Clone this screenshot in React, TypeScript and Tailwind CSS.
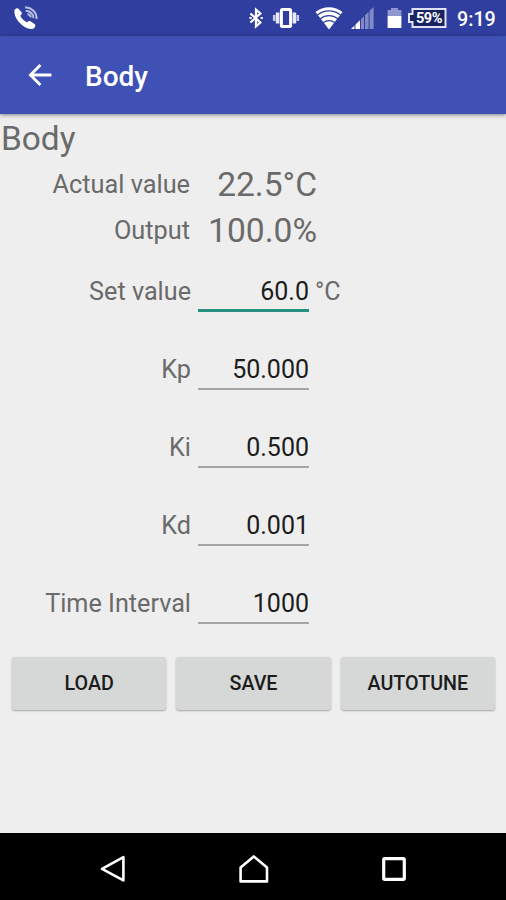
import { useState } from "react";

type Reading = {
  label: string;
  value: string;
};

type Field = {
  id: string;
  label: string;
  value: string;
  unit?: string;
};

const readings: Reading[] = [
  { label: "Actual value", value: "22.5°C" },
  { label: "Output", value: "100.0%" },
];

const fields: Field[] = [
  { id: "set", label: "Set value", value: "60.0", unit: "°C" },
  { id: "kp", label: "Kp", value: "50.000" },
  { id: "ki", label: "Ki", value: "0.500" },
  { id: "kd", label: "Kd", value: "0.001" },
  { id: "interval", label: "Time Interval", value: "1000" },
];

const actions = ["LOAD", "SAVE", "AUTOTUNE"];

const StatusBar = () => (
  <div className="flex h-9 shrink-0 items-center bg-[#303f9f] text-white">
    {/* Wi-Fi calling */}
    <svg width="26" height="26" viewBox="0 0 26 26" className="ml-[13px]">
      <path
        d="M1.4 5.8C1.4 4 4 2.6 5.2 3.6L8.6 7.2C9.3 8.6 8.4 9.8 7.2 10.6C8.4 13.6 11 16 14 17.4C15 16.2 16.2 15.6 17.4 16.2L21.8 19.2C23.2 20.4 21.8 23 20 23.8C12 25.6 0.8 14.4 1.4 5.8Z"
        fill="#fff"
      />
      <g fill="none" stroke="#b9bfe4" strokeWidth="2">
        <path d="M12 2.6C17.5 1.6 24.4 7.4 23.4 14" />
        <path d="M12.8 6C16.6 5.4 21 9.6 20.4 13.2" />
        <path d="M14.4 9.2C16 9 18 11 17.7 12.4" />
      </g>
    </svg>

    <div className="ml-auto flex h-9 items-center">
      <svg width="16" height="22" viewBox="0 0 16 22">
        <path
          d="M2.4 6.5L12.4 15.5L8 19.4V2.6L12.4 6.5L2.4 15.5"
          fill="none"
          stroke="#fff"
          strokeWidth="2.2"
        />
        <path d="M1.4 11H3.6M12.6 11H14.8" stroke="#fff" strokeWidth="2.2" />
      </svg>
      <svg width="28" height="22" viewBox="0 0 28 22" className="ml-[8px]">
        <rect
          x="9.4"
          y="2.4"
          width="9.2"
          height="17.2"
          rx="1"
          fill="none"
          stroke="#fff"
          strokeWidth="3"
        />
        <path d="M5.6 5.5V16.5M22.4 5.5V16.5" stroke="#e8eaf6" strokeWidth="3.6" />
        <path d="M2.2 8V14M25.8 8V14" stroke="#c5cae9" strokeWidth="2.6" />
      </svg>
      <svg width="28" height="24" viewBox="0 0 28 24" className="ml-[15px]">
        <path d="M0.5 6C8 -0.4 20 -0.4 27.5 6L14 23.5Z" fill="#fff" />
        <g fill="none" stroke="#303f9f" strokeWidth="1.2">
          <path d="M2.5 9C9.5 3.6 18.5 3.6 25.5 9" />
          <path d="M5 13C10.5 8.6 17.5 8.6 23 13" />
          <path d="M8 16.8C12 13.8 16 13.8 20 16.8" />
        </g>
      </svg>
      <svg width="23" height="23" viewBox="0 0 23 23" className="ml-[8px]">
        <path d="M0 22L3.5 18.6V22ZM4.5 17.6L9 13.2V22H4.5Z" fill="#fff" />
        <path
          d="M10 12.2L13 9.2V22H10ZM14 8.2L17.6 4.8V22H14ZM18.6 3.8L22.6 0V22H18.6Z"
          fill="#7f8ac6"
        />
      </svg>
      <svg width="15" height="22" viewBox="0 0 15 22" className="ml-[13px]">
        <path d="M4 1H11V3H14.4V10H0.6V3H4Z" fill="#8f99cf" />
        <path d="M0.6 9H14.4V21H0.6Z" fill="#fff" />
      </svg>
      <div className="relative ml-[5px] h-[22px] w-[40px]">
        <svg width="40" height="22" viewBox="0 0 40 22">
          <path
            d="M5.5 2H38.5V20H5.5V15H2V7H5.5Z"
            fill="#1a2361"
            stroke="#dfe2f3"
            strokeWidth="2"
          />
        </svg>
        <span className="absolute inset-0 pt-px pl-[4px] text-center text-[14.5px] leading-[22px] font-bold tracking-[-0.4px]">
          59%
        </span>
      </div>
      <span className="mr-[10px] ml-[10px] w-[39px] pt-[3px] text-[19.7px] leading-9 font-medium whitespace-nowrap">
        9:19
      </span>
    </div>
  </div>
);

const AppBar = () => (
  <header className="z-10 flex h-[78px] shrink-0 items-center bg-[#3f51b5] text-white shadow-[0_1px_4px_rgba(0,0,0,0.45)]">
    <button aria-label="Back" className="ml-[28px]">
      <svg width="24" height="24" viewBox="0 0 24 24">
        <path
          d="M23.4 12H2.8M12.4 2L2.4 12L12.4 22"
          fill="none"
          stroke="#fff"
          strokeWidth="2.8"
        />
      </svg>
    </button>
    <h1 className="ml-[33px] pt-[4px] text-[28px] leading-[34px] font-medium">
      Body
    </h1>
  </header>
);

const NavBar = () => (
  <nav className="flex h-[67px] shrink-0 items-center justify-between bg-black pt-[4px] pr-[99px] pl-[99px]">
    <button aria-label="Back">
      <svg width="28" height="30" viewBox="0 0 28 30">
        <path
          d="M24.4 3.2V26.4L3 14.8Z"
          fill="none"
          stroke="#fff"
          strokeWidth="2.6"
          strokeLinejoin="round"
        />
      </svg>
    </button>
    <button aria-label="Home">
      <svg width="30" height="30" viewBox="0 0 30 30">
        <path
          d="M1.6 27.4V13.6L14.8 2.4L28 13.6V27.4Z"
          fill="none"
          stroke="#fff"
          strokeWidth="2.6"
          strokeLinejoin="round"
        />
      </svg>
    </button>
    <button aria-label="Recents">
      <svg width="26" height="26" viewBox="0 0 26 26">
        <rect
          x="2.7"
          y="2.7"
          width="20.6"
          height="20.6"
          rx="1"
          fill="none"
          stroke="#fff"
          strokeWidth="3.2"
        />
      </svg>
    </button>
  </nav>
);

const App = () => {
  const [values, setValues] = useState<Record<string, string>>(
    Object.fromEntries(fields.map((field) => [field.id, field.value]))
  );
  const [active, setActive] = useState("set");

  return (
    <div className="flex h-[900px] w-[506px] flex-col overflow-hidden bg-[#eeeeee] font-[Roboto,sans-serif] text-[#6a6a6a]">
      <StatusBar />
      <AppBar />

      <main className="flex flex-1 flex-col">
        <h2 className="h-12 pl-px text-[33.4px] leading-[49px]">Body</h2>

        {readings.map((reading) => (
          <div
            key={reading.label}
            className="flex h-[45.5px] items-center pt-px"
          >
            <span className="w-[190px] text-right text-[25.3px]">
              {reading.label}
            </span>
            <span className="w-[127px] text-right text-[33.6px]">
              {reading.value}
            </span>
          </div>
        ))}

        {fields.map((field) => (
          <div key={field.id} className="flex h-[78px] items-center">
            <label
              htmlFor={field.id}
              className="w-[191px] text-right text-[25.2px]"
            >
              {field.label}
            </label>
            <input
              id={field.id}
              value={values[field.id]}
              onFocus={() => setActive(field.id)}
              onChange={(e) =>
                setValues({ ...values, [field.id]: e.target.value })
              }
              className={`ml-[7px] h-[40px] w-[111px] text-right text-[25px] text-[#1c1c1c] outline-none ${
                active === field.id
                  ? "border-b-3 border-[#26917f] pt-[2px]"
                  : "border-b-2 border-[#a5a5a5] pt-px"
              }`}
            />
            {field.unit && (
              <span className="ml-[6px] text-[25px]">{field.unit}</span>
            )}
          </div>
        ))}

        <div className="mt-[14px] flex gap-[10px] pr-[11px] pl-[12px]">
          {actions.map((action) => (
            <button
              key={action}
              className="h-[53px] flex-1 rounded-[3px] bg-[#d6d8d7] text-[19.7px] font-medium text-[#1c1c1c] shadow-[0_1px_2px_rgba(0,0,0,0.3)]"
            >
              {action}
            </button>
          ))}
        </div>
      </main>

      <NavBar />
    </div>
  );
};

export default App;
